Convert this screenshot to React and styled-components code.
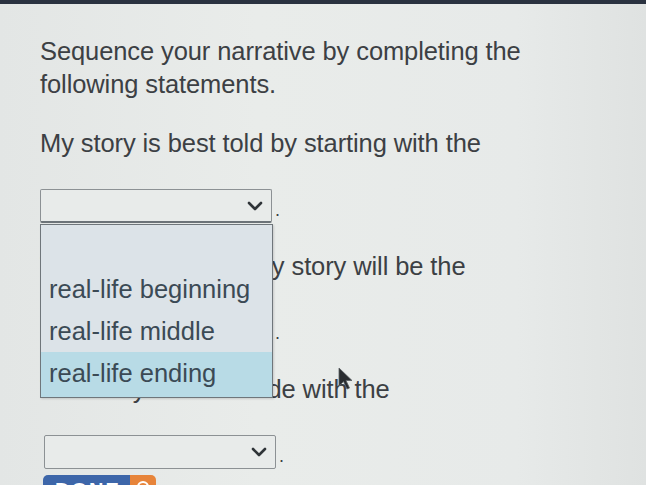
import React from "react";
import styled, { createGlobalStyle } from "styled-components";

const Global = createGlobalStyle`
  html, body { margin: 0; padding: 0; overflow: hidden; background: #e6e9e8; }
  * { box-sizing: border-box; }
`;

const Screen = styled.div`
  position: relative;
  width: 646px;
  height: 485px;
  overflow: hidden;
  background: linear-gradient(90deg, #e3e6e5 0%, #e9ecea 40%, #e7eae9 80%, #dfe2e1 100%);
  font-family: "Liberation Sans", Arial, sans-serif;
  color: #3c4044;
`;

const TopBar = styled.div`
  height: 4px;
  background: #2a3240;
`;

const Content = styled.div`
  padding: 31px 0 0 40px;
  width: 540px;
`;

const Text = styled.p`
  margin: 0 0 ${(p) => p.$mb || 0}px;
  font-size: 25.5px;
  line-height: 33px;
  letter-spacing: -0.1px;
`;

const Row = styled.div`
  display: flex;
  align-items: flex-end;
  margin-bottom: 27px;
  margin-left: ${(p) => p.$indent || 0}px;
`;

const SelectWrap = styled.div`
  position: relative;
`;

const SelectBox = styled.div`
  width: 232px;
  height: 34px;
  border: 1px solid #8c9194;
  border-bottom: ${(p) => (p.$open ? "2px solid #6c7378" : "1px solid #8c9194")};
  border-radius: 2px;
  background: #e8ebea;
  display: flex;
  align-items: center;
  justify-content: flex-end;
  padding-right: 8px;
`;

const Period = styled.span`
  font-size: 18px;
  line-height: 18px;
  margin-left: 3px;
  margin-bottom: 4px;
  color: #3c4044;
`;

const List = styled.div`
  position: absolute;
  top: calc(100% + 1px);
  left: 0;
  width: 233px;
  border: 1px solid #6f767b;
  background: #dce3e8;
  box-shadow: 1px 1px 2px rgba(0, 0, 0, 0.15);
  z-index: 5;
`;

const Option = styled.div`
  height: ${(p) => p.$h || 42}px;
  padding: 0 0 0 8px;
  font-size: 25.5px;
  line-height: 42px;
  color: #3b4a55;
  white-space: nowrap;
  background: ${(p) => (p.$active ? "#b8dbe6" : "transparent")};
`;

const ButtonRow = styled.div`
  display: flex;
  margin: -21px 0 0 3px;
`;

const DoneMain = styled.div`
  width: 87px;
  height: 32px;
  background: #3d66a9;
  border-radius: 5px 0 0 5px;
  color: #ffffff;
  font-weight: bold;
  font-size: 20px;
  letter-spacing: 2px;
  padding: 4px 0 0 12px;
`;

const DoneSide = styled.div`
  width: 26px;
  height: 32px;
  background: #e7843a;
  border-radius: 0 5px 5px 0;
  display: flex;
  justify-content: center;
  padding-top: 5px;
`;

const Cursor = styled.svg`
  position: absolute;
  left: 338px;
  top: 367px;
  z-index: 10;
`;

const Chevron = () => (
  <svg width="16" height="10" viewBox="0 0 16 10">
    <path d="M2 2 L8 8 L14 2" fill="none" stroke="#2f3438" strokeWidth="2.6" strokeLinecap="round" strokeLinejoin="round" />
  </svg>
);

function Dropdown({ open, options }) {
  return (
    <SelectWrap>
      <SelectBox $open={open}>
        <Chevron />
      </SelectBox>
      {open && (
        <List>
          <Option $h={43} />
          {options.map((o, i) => (
            <Option key={o} $active={o === "real-life ending"} $h={i === 2 ? 45 : 42}>
              {o}
            </Option>
          ))}
        </List>
      )}
    </SelectWrap>
  );
}

export default function App() {
  const options = ["real-life beginning", "real-life middle", "real-life ending"];
  return (
    <Screen>
      <Global />
      <TopBar />
      <Content>
        <Text $mb={26}>Sequence your narrative by completing the following statements.</Text>
        <Text $mb={29}>My story is best told by starting with the</Text>
        <Row>
          <Dropdown open options={options} />
          <Period>.</Period>
        </Row>
        <Text $mb={29}>The middle part of my story will be the</Text>
        <Row>
          <Dropdown />
          <Period>.</Period>
        </Row>
        <Text $mb={29}>The story will conclude with the</Text>
        <Row $indent={4}>
          <Dropdown />
          <Period>.</Period>
        </Row>
        <ButtonRow>
          <DoneMain>DONE</DoneMain>
          <DoneSide>
            <svg width="14" height="14" viewBox="0 0 14 14">
              <circle cx="7" cy="7" r="5" fill="none" stroke="#ffffff" strokeWidth="2" />
            </svg>
          </DoneSide>
        </ButtonRow>
      </Content>
      <Cursor width="16" height="24" viewBox="0 0 16 24">
        <path d="M1 1 L1 19 L5.5 14.5 L9 22 L11.5 21 L8 13.5 L14 13.5 Z" fill="#2a2d30" stroke="#5a5f63" strokeWidth="0.8" />
      </Cursor>
    </Screen>
  );
}
